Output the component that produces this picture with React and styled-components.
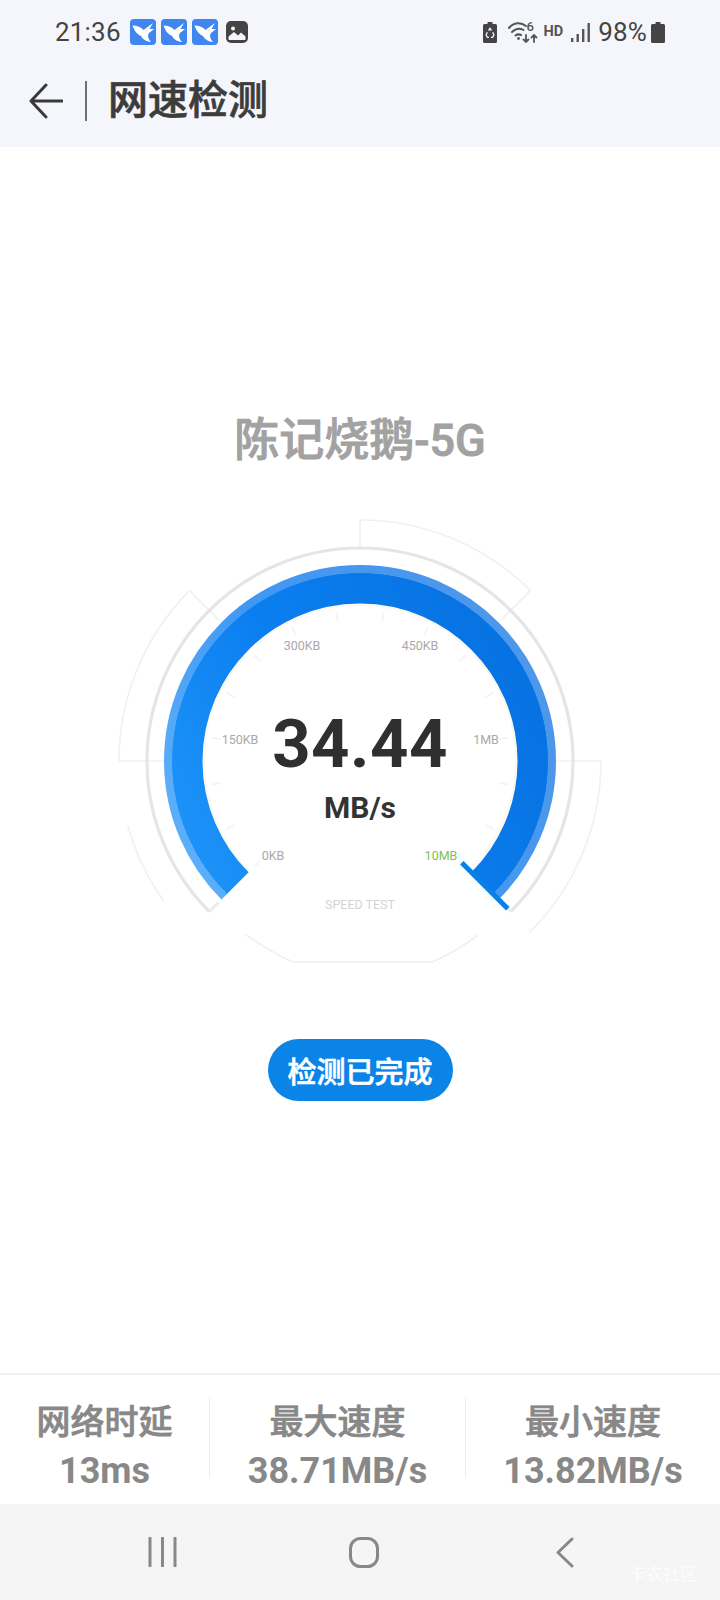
import React from "react";
import styled, { createGlobalStyle } from "styled-components";

const Global = createGlobalStyle`
  html, body { margin: 0; padding: 0; background: #fff; }
  #root { width: 720px; height: 1600px; }
`;
const SANS = `Roboto, "Noto Sans CJK SC", sans-serif`;

const Page = styled.div`
  width: 720px; height: 1600px; display: flex; flex-direction: column;
  background: #fff; font-family: ${SANS}; overflow: hidden;
`;
const TopArea = styled.header`
  background: #f4f6fb; height: 147px; display: flex; flex-direction: column; flex: none;
`;
const StatusBar = styled.div`
  height: 64px; display: flex; align-items: center; justify-content: space-between;
  padding: 0 55px 0 55px; color: #444;
`;
const StatusGroup = styled.div`
  display: flex; align-items: center; gap: ${p => p.$gap || 0}px;
`;
const StatusText = styled.span`
  font-size: 26px; line-height: 30px; letter-spacing: 0.2px; margin-right: ${p => p.$mr || 0}px;
`;
const HeaderRow = styled.div`
  flex: 1; display: flex; align-items: center; padding: 0 0 10px 29px;
`;
const VDivider = styled.span`
  width: 2px; height: 40px; background: #6f7072; margin: 0 21px 0 22px;
`;
const HeaderTitle = styled.h1`
  margin: 0; font-size: 40px; line-height: 46px; font-weight: 500; color: #3c3c3c;
  -webkit-text-stroke: 0.7px #3c3c3c;
`;
const Main = styled.main`
  flex: 1; display: flex; flex-direction: column; align-items: center; padding-top: 267px;
`;
const NetName = styled.div`
  font-size: 45px; line-height: 54px; font-weight: 500; color: #a2a2a2;
  -webkit-text-stroke: 0.9px #a2a2a2;
`;
const Gauge = styled.div`
  position: relative; width: 500px; height: 460px; margin-top: 42px; flex: none;
`;
const Dial = styled.svg`
  display: block; width: 500px; height: 460px;
`;
const DialLabel = styled.text`
  font-family: ${SANS}; font-size: 12.5px; fill: ${p => p.$c || "#a9a9a9"}; text-anchor: middle;
`;
const Reading = styled.div`
  position: absolute; left: 0; right: 0; top: 195px; display: flex; flex-direction: column; align-items: center;
`;
const ReadingValue = styled.div`
  font-size: 67px; line-height: 78px; font-weight: 700; color: #2f2f2f; letter-spacing: 0.5px;
`;
const ReadingUnit = styled.div`
  font-size: 30px; line-height: 36px; font-weight: 700; color: #333; margin-top: 7px;
`;
const DoneButton = styled.button`
  margin-top: 69px; width: 185px; height: 62px; border: 0; border-radius: 31px; padding: 0;
  background: #0b84e8; color: #fff; font-family: ${SANS}; font-size: 29px; font-weight: 500;
  -webkit-text-stroke: 0.6px #fff;
`;
const Stats = styled.section`
  flex: none; height: 131px; border-top: 2px solid #f1f1f1; display: grid;
  grid-template-columns: 209px 256px 255px; padding-top: 23px; box-sizing: border-box;
`;
const StatCell = styled.div`
  height: 80px; display: flex; flex-direction: column; align-items: center; justify-content: flex-start;
  color: #888; border-left: ${p => (p.$first ? "0" : "1px solid #eeeeee")};
`;
const StatLabel = styled.div`
  font-size: 34px; line-height: 48px; font-weight: 500; flex: none;
  -webkit-text-stroke: 0.7px #888;
`;
const StatValue = styled.div`
  font-size: 36px; line-height: 50px; font-weight: 700; flex: none;
`;
const NavBar = styled.nav`
  position: relative; flex: none; height: 96px; background: #f5f5f6;
  display: grid; grid-template-columns: 209px 256px 255px; padding-top: 33px; box-sizing: border-box;
`;
const NavSlot = styled.div`
  height: 30px; display: flex; align-items: center; justify-content: ${p => p.$j || "center"};
  padding-left: ${p => p.$pl || 0}px;
`;
const NavIcon = styled.svg`
  display: block; fill: none; stroke: #888; stroke-width: 3; stroke-linecap: round; stroke-linejoin: round;
`;
const Watermark = styled.span`
  position: absolute; right: 23px; top: 60px; font-size: 17px; line-height: 20px; color: rgba(255,255,255,.8);
`;

const C = { x: 250, y: 251 };
const pt = (r, a) => {
  const t = (a * Math.PI) / 180;
  return [C.x + r * Math.sin(t), C.y - r * Math.cos(t)];
};
const arc = (r, a0, a1) => {
  const [x0, y0] = pt(r, a0);
  const [x1, y1] = pt(r, a1);
  const large = Math.abs(a1 - a0) > 180 ? 1 : 0;
  return `M${x0.toFixed(2)} ${y0.toFixed(2)}A${r} ${r} 0 ${large} ${a1 > a0 ? 1 : 0} ${x1.toFixed(2)} ${y1.toFixed(2)}`;
};
const seg = (r0, a0, r1, a1 = a0) => {
  const [x0, y0] = pt(r0, a0);
  const [x1, y1] = pt(r1, a1);
  return `M${x0.toFixed(2)} ${y0.toFixed(2)}L${x1.toFixed(2)} ${y1.toFixed(2)}`;
};
const ticks = [];
for (let a = -135; a <= 135; a += 18) ticks.push(a);

const labels = [
  ["300KB", 192, 140], ["450KB", 310, 140], ["150KB", 130, 234], ["1MB", 376, 234],
  ["0KB", 163, 350], ["SPEED TEST", 250, 399],
];

function GaugeDial() {
  const thin = "#eff0f0";
  return (
    <Dial viewBox="0 0 500 460" fill="none">
      <defs>
        <linearGradient id="band" gradientUnits="userSpaceOnUse" x1="60" y1="380" x2="450" y2="180">
          <stop offset="0" stopColor="#2097fa" />
          <stop offset="0.45" stopColor="#0b7ff0" />
          <stop offset="1" stopColor="#0771e0" />
        </linearGradient>
        <linearGradient id="rim" gradientUnits="userSpaceOnUse" x1="60" y1="380" x2="450" y2="180">
          <stop offset="0" stopColor="#62b3fb" />
          <stop offset="0.45" stopColor="#3f98f3" />
          <stop offset="1" stopColor="#4f97ea" />
        </linearGradient>
      </defs>
      <path d={arc(241, 0, 45)} stroke={thin} strokeWidth="1.6" />
      <path d={arc(241, -90, -45)} stroke={thin} strokeWidth="1.6" />
      <path d={arc(241, 90, 135.5)} stroke={thin} strokeWidth="1.6" />
      <path d={arc(241, -105.5, -125.5)} stroke={thin} strokeWidth="1.6" />
      <path d={seg(241, 0, 213)} stroke={thin} strokeWidth="1.6" />
      <path d={seg(241, 45, 199)} stroke={thin} strokeWidth="1.6" />
      <path d={seg(241, -45, 199)} stroke={thin} strokeWidth="1.6" />
      <path d={seg(241, 90, 196)} stroke={thin} strokeWidth="1.6" />
      <path d={seg(241, -90, 196)} stroke={thin} strokeWidth="1.6" />
      <path d="M135 424Q160 442 183 452H322Q346 442 368 425" stroke={thin} strokeWidth="1.6" />
      <path d={arc(213, -135, 135)} stroke="#e4e5e7" strokeWidth="3.2" />
      <path d={seg(213, -135, 200)} stroke="#eceded" strokeWidth="3" />
      <path d={seg(213, 135, 200)} stroke="#eceded" strokeWidth="3" />
      <path d={arc(156, -135, 135)} stroke="#fdf6ea" strokeWidth="1.5" />
      {ticks.map(a => (
        <path key={a} d={seg(141, a, 150)} stroke="#f5f2ec" strokeWidth="1.5" />
      ))}
      <path d={arc(173, -135, 135)} stroke="url(#band)" strokeWidth="31" />
      <path d={arc(192, -135, 135)} stroke="url(#rim)" strokeWidth="8" />
      <path d={seg(144, 135, 209, 135)} stroke="#0a7fe6" strokeWidth="5" />
      {labels.map(([t, x, y]) => (
        <DialLabel key={t} x={x} y={y} $c={t === "SPEED TEST" ? "#d4d4d4" : undefined}>{t}</DialLabel>
      ))}
      <DialLabel x="331" y="350" $c="#7cc256">10MB</DialLabel>
    </Dial>
  );
}

const BirdTile = () => (
  <svg width="26" height="26" viewBox="0 0 26 26">
    <rect width="26" height="26" rx="4" fill="#3f86f0" />
    <path d="M2.5 6.5C7 6.5 11 8 13.5 11L23 4L19.5 10L24 10L18.5 14.5C17.5 18 18.5 20 21 23C16 22.5 12.5 20 11 17C7 15.5 4 11 2.5 6.5Z" fill="#fff" />
    <path d="M14 12L19 8.5L17 12.5Z" fill="#ffeeb8" />
  </svg>
);
const PictureIcon = () => (
  <svg width="22" height="22" viewBox="0 0 22 22" style={{ marginLeft: 3 }}>
    <rect width="22" height="22" rx="5" fill="#444" />
    <circle cx="7" cy="7.5" r="2" fill="#f4f6fb" />
    <path d="M2.5 18V15.5L8 11L12 14.5L15 11.5L19.5 15.5V18Q19.5 19 18.5 19H3.5Q2.5 19 2.5 18Z" fill="#f4f6fb" />
  </svg>
);
const RecycleBattery = () => (
  <svg width="14" height="21" viewBox="0 0 14 21" style={{ marginRight: 11 }}>
    <path d="M4.5 0H9.5V2H12.5A1.5 1.5 0 0 1 14 3.5V19.5A1.5 1.5 0 0 1 12.5 21H1.5A1.5 1.5 0 0 1 0 19.5V3.5A1.5 1.5 0 0 1 1.5 2H4.5Z" fill="#444" />
    <path d="M5.6 8.6L7 6.2L8.4 8.6M9.6 10.2L11 12.8L9.6 15.4H8M6 15.4H4.4L3 12.8L4.4 10.2" fill="none" stroke="#f4f6fb" strokeWidth="1.3" strokeLinejoin="round" />
  </svg>
);
const WifiIcon = () => (
  <svg width="30" height="24" viewBox="0 0 30 24" fill="none" stroke="#555" strokeLinecap="round" style={{ marginRight: 5 }}>
    <path d="M1 8C6 2 13 2 18 6" strokeWidth="2" />
    <path d="M4 12C8 8 12 8 15.5 10" strokeWidth="2" />
    <path d="M7.5 15.5C9.5 14 11 14 13 15" strokeWidth="2" />
    <circle cx="10.5" cy="18.5" r="1.4" fill="#555" stroke="none" />
    <path d="M18 15V22M15.5 19.5L18 22L20.5 19.5M26 22V15M23.5 17.5L26 15L28.5 17.5" strokeWidth="1.8" />
    <text x="18.5" y="11" fontSize="13" fontFamily="Roboto" fontWeight="500" fill="#555" stroke="none">6</text>
  </svg>
);
const HdMark = styled.span`
  font-size: 14.5px; font-weight: 700; color: #555; line-height: 16px; margin-right: 8px;
`;
const SignalIcon = () => (
  <svg width="19" height="19" viewBox="0 0 19 19" fill="#555" style={{ marginRight: 8 }}>
    <rect x="0" y="15" width="2.4" height="4" />
    <rect x="5.5" y="11" width="2.4" height="8" />
    <rect x="11" y="6" width="2.4" height="13" />
    <rect x="16.5" y="0" width="2.4" height="19" />
  </svg>
);
const BatteryIcon = () => (
  <svg width="14" height="21" viewBox="0 0 14 21" style={{ marginLeft: 4 }}>
    <path d="M4.5 0H9.5V2H12.5A1.5 1.5 0 0 1 14 3.5V19.5A1.5 1.5 0 0 1 12.5 21H1.5A1.5 1.5 0 0 1 0 19.5V3.5A1.5 1.5 0 0 1 1.5 2H4.5Z" fill="#444" />
  </svg>
);

export default function App() {
  return (
    <>
      <Global />
      <Page>
        <TopArea>
          <StatusBar>
            <StatusGroup $gap={5}>
              <StatusText $mr={4}>21:36</StatusText>
              <BirdTile /><BirdTile /><BirdTile />
              <PictureIcon />
            </StatusGroup>
            <StatusGroup>
              <RecycleBattery />
              <WifiIcon />
              <HdMark>HD</HdMark>
              <SignalIcon />
              <StatusText>98%</StatusText>
              <BatteryIcon />
            </StatusGroup>
          </StatusBar>
          <HeaderRow>
            <svg width="34" height="36" viewBox="0 0 34 36" fill="none" stroke="#3a3a3a" strokeWidth="3" strokeLinecap="round" strokeLinejoin="round">
              <path d="M2 18H33M17 2L2 18L17 34" />
            </svg>
            <VDivider />
            <HeaderTitle>网速检测</HeaderTitle>
          </HeaderRow>
        </TopArea>
        <Main>
          <NetName>陈记烧鹅-5G</NetName>
          <Gauge>
            <GaugeDial />
            <Reading>
              <ReadingValue>34.44</ReadingValue>
              <ReadingUnit>MB/s</ReadingUnit>
            </Reading>
          </Gauge>
          <DoneButton>检测已完成</DoneButton>
        </Main>
        <Stats>
          <StatCell $first><StatLabel>网络时延</StatLabel><StatValue>13ms</StatValue></StatCell>
          <StatCell><StatLabel>最大速度</StatLabel><StatValue>38.71MB/s</StatValue></StatCell>
          <StatCell><StatLabel>最小速度</StatLabel><StatValue>13.82MB/s</StatValue></StatCell>
        </Stats>
        <NavBar>
          <NavSlot $j="flex-start" $pl={148}>
            <NavIcon width="29" height="30" viewBox="0 0 29 30">
              <path d="M2 1V29M14.5 1V29M27 1V29" />
            </NavIcon>
          </NavSlot>
          <NavSlot $j="flex-start" $pl={140}>
            <NavIcon width="30" height="31" viewBox="0 0 30 31">
              <rect x="1.5" y="1.5" width="27" height="28" rx="10" />
            </NavIcon>
          </NavSlot>
          <NavSlot $j="flex-start" $pl={91}>
            <NavIcon width="18" height="31" viewBox="0 0 18 31">
              <path d="M16 2L2 15.5L16 29" />
            </NavIcon>
          </NavSlot>
          <Watermark>卡农社区</Watermark>
        </NavBar>
      </Page>
    </>
  );
}
